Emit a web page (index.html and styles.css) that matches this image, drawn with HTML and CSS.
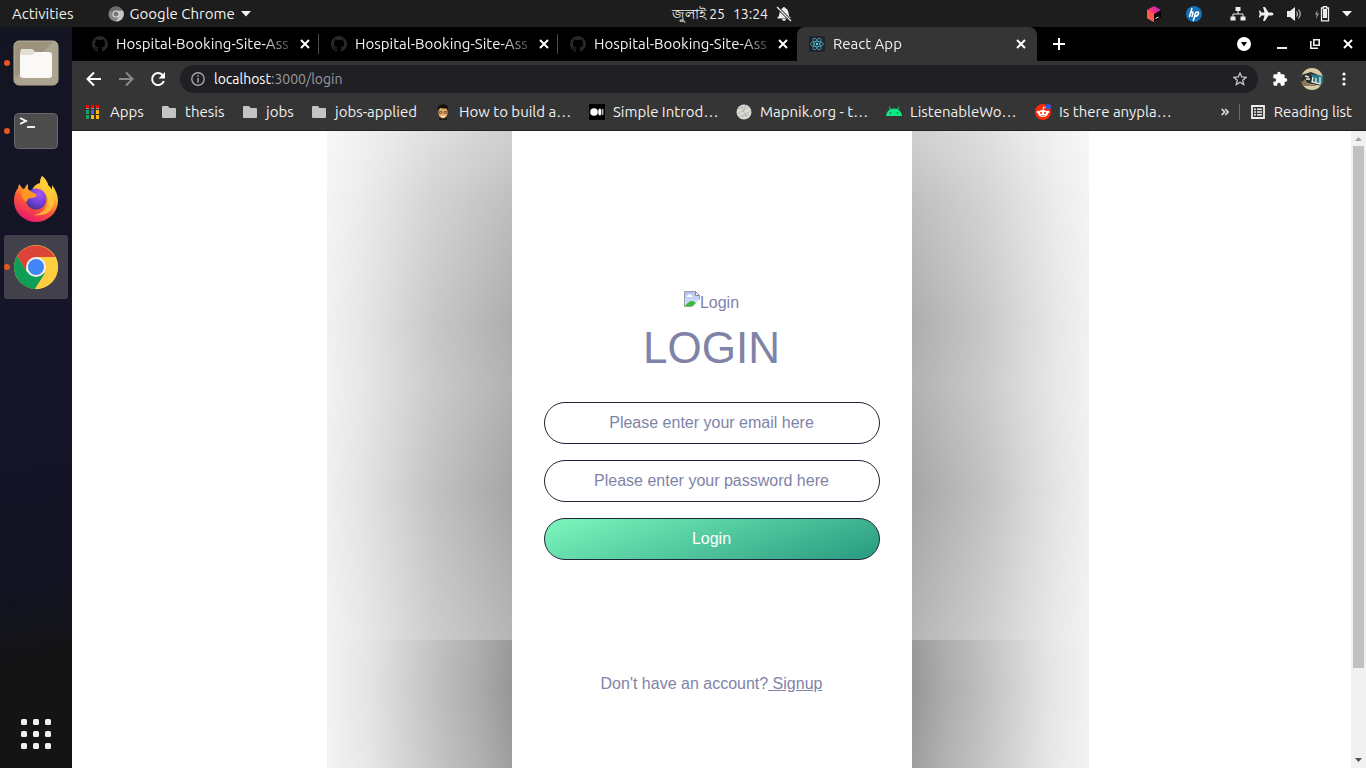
FILE: index.html
```html
<!DOCTYPE html>
<html lang="en">
<head>
<meta charset="utf-8">
<title>React App</title>
<link rel="stylesheet" href="styles.css">
</head>
<body>
<svg class="defs" width="0" height="0" aria-hidden="true">
  <defs>
    <symbol id="github" viewBox="0 0 16 16"><path fill="#24292e" d="M8 0C3.58 0 0 3.58 0 8c0 3.54 2.29 6.53 5.47 7.59.4.07.55-.17.55-.38v-1.49c-2.01.37-2.53-.49-2.69-.94-.09-.23-.48-.94-.82-1.13-.28-.15-.68-.52-.01-.53.63-.01 1.08.58 1.23.82.72 1.21 1.87.87 2.33.66.07-.52.28-.87.51-1.07-1.78-.2-3.64-.89-3.64-3.95 0-.87.31-1.59.82-2.15-.08-.2-.36-1.02.08-2.12 0 0 .67-.21 2.2.82a7.6 7.6 0 014 0c1.53-1.04 2.2-.82 2.2-.82.44 1.1.16 1.92.08 2.12.51.56.82 1.27.82 2.15 0 3.07-1.87 3.75-3.65 3.95.29.25.54.73.54 1.48v2.19c0 .21.15.46.55.38A8 8 0 008 0z"/></symbol>
    <symbol id="close" viewBox="0 0 10 10"><path d="M1 1l8 8M9 1L1 9" stroke="#fff" stroke-width="1.9"/></symbol>
    <symbol id="folder" viewBox="0 0 16 16"><path fill="#c4c4c4" d="M2 2h5l1.500 2H14q1 0 1 1v8q0 1-1 1H2q-1 0-1-1V3q0-1 1-1z"/></symbol>
    <symbol id="caret" viewBox="0 0 10 6"><path fill="#f2f2f2" d="M0 0h10L5 5.500z"/></symbol>
    <linearGradient id="ffFlame" x1=".8" y1="0" x2=".3" y2="1"><stop offset="0" stop-color="#fff04a"/><stop offset=".35" stop-color="#ffb52e"/><stop offset=".62" stop-color="#ff5a36"/><stop offset="1" stop-color="#e5156f"/></linearGradient>
    <radialGradient id="ffGlobe" cx=".65" cy=".25" r=".8"><stop offset="0" stop-color="#a755f8"/><stop offset=".6" stop-color="#7140d8"/><stop offset="1" stop-color="#43308e"/></radialGradient>
    <linearGradient id="jb" x1="1" y1="0" x2="0" y2="1"><stop offset="0" stop-color="#9c28e8"/><stop offset=".45" stop-color="#f92f77"/><stop offset="1" stop-color="#ff8a1e"/></linearGradient>
    <linearGradient id="sky" x1="0" y1="0" x2="0" y2="1"><stop offset="0" stop-color="#aec2f0"/><stop offset="1" stop-color="#dfe7ff"/></linearGradient>
    <clipPath id="avatarClip"><circle cx="11" cy="11" r="11"/></clipPath>
  </defs>
</svg>

<header class="topbar">
  <div class="topbar-left">
    <button class="plain">Activities</button>
    <button class="plain app-menu">
      <svg width="16" height="16" viewBox="0 0 16 16"><circle cx="8" cy="8" r="7.500" fill="#858585"/><path d="M8 4.500h7A7.500 7.500 0 018 15.500L11 10z" fill="#c4c4c4"/><path d="M1.500 4.200A7.500 7.500 0 0114.700 4.500H8L5 8z" fill="#6c6c6c"/><circle cx="8" cy="8" r="3.600" fill="#e0e0e0"/><circle cx="8" cy="8" r="2.500" fill="#777"/></svg>
      Google Chrome
      <svg width="10" height="6"><use href="#caret"/></svg>
    </button>
  </div>
  <button class="plain clock"><span lang="bn">জুলাই 25</span><span>13:24</span>
    <svg width="16" height="16" viewBox="0 0 16 16"><path fill="#eee" d="M8 1q1 0 1.200 1Q12 3 12.500 7q0 3 2 4.500v1h-13v-1Q3.500 10 3.500 7 4 3 6.800 2 7 1 8 1zM6 13h4q-.5 2-2 2t-2-2z"/><path d="M1 1l14 14" stroke="#1d1d1d" stroke-width="3"/><path d="M1 1l14 14" stroke="#eee" stroke-width="1.300"/></svg>
  </button>
  <div class="tray">
    <svg width="16" height="16" viewBox="0 0 16 16"><path fill="url(#jb)" d="M8 0l7 4v8l-7 4-7-4V4z"/><path fill="#ff5a4c" d="M1 4l7 4v8l-7-4z"/><path fill="#050505" d="M8 8l7-4v8l-7 4z"/><path d="M9.500 12.500l3-1.500" stroke="#fff"/></svg>
    <svg class="hp" width="16" height="16" viewBox="0 0 16 16"><circle cx="8" cy="8" r="8" fill="#1670b5"/><path d="M6 2L3.300 11M4.500 7q3-2 2.500 0L5.800 11M9.800 6L7.200 15M9.500 6.500q3.500-1.500 3 1T8.500 10.500" fill="none" stroke="#fff" stroke-width="1.500"/></svg>
    <svg width="16" height="16" viewBox="0 0 16 16"><path fill="#eee" d="M5.500 1h5v4h-5zM.5 10.500h5v4h-5zM10.500 10.500h5v4h-5z"/><path d="M8 5v3M3 11V8h10v3" fill="none" stroke="#eee"/></svg>
    <svg width="16" height="16" viewBox="0 0 16 16"><path fill="#eee" d="M5 1h2l3.500 5.500H14q1.500.5 1.500 1.500T14 9.500h-3.500L7 15H5l1.500-5.500H3.500L2 11.500H.8L1.700 8 .8 4.500H2l1.500 2h3z"/></svg>
    <svg width="16" height="16" viewBox="0 0 16 16"><path fill="#eee" d="M1 5h3l5-4v14l-5-4H1z"/><path d="M10.500 5.500q2 2.500 0 5M12.500 3.500q3.500 4.500 0 9" fill="none" stroke="#bbb" stroke-width="1.200"/></svg>
    <svg width="16" height="16" viewBox="0 0 16 16"><path fill="#999" d="M3.500 4L1 8.500h1.700L2 13l3-5.500H3.300z"/><path fill="#eee" d="M9 3h4v9H9z"/><path d="M7.500 2h2V.7h3V2h2v12.800h-7z" fill="none" stroke="#eee" stroke-width="1.300"/></svg>
    <svg width="10" height="6"><use href="#caret"/></svg>
  </div>
</header>

<div class="desktop">
  <nav class="dock" aria-label="Dock">
    <button class="dock-item running" aria-label="Files"><svg width="46" height="46" viewBox="0 0 46 46"><rect x="1" y="1" width="44" height="44" rx="5" fill="#9d937c" stroke="#b8b19d"/><path d="M2 38L40 2h2q2 0 2 3v36q0 3-3 3H5q-3 0-3-3z" fill="#aca48f"/><path d="M7 15q0-6 2-6h9q3 0 4 4h12v8H7z" fill="#e4dfd3"/><path d="M7 15h12l3-3h14q3 0 3 3v20q0 3-3 3H10q-3 0-3-3z" fill="#faf9f7"/></svg></button>
    <button class="dock-item running" aria-label="Terminal"><svg width="46" height="46" viewBox="0 0 46 46"><rect x="1.500" y="5.500" width="43" height="35" rx="4" fill="#4c4c4c" stroke="#696969"/><path d="M7 10l6 3-6 3" fill="none" stroke="#fff" stroke-width="1.800"/><path d="M14 19h8" stroke="#fff" stroke-width="1.800"/></svg></button>
    <button class="dock-item" aria-label="Firefox"><svg width="46" height="48" viewBox="0 0 46 48"><path fill="url(#ffFlame)" d="M29 1q5 4 6 9 3 3 4 5v-5q6 8 6 16a22 21 0 01-44 0q0-8 4-13l1-4 4 5 2-1q0-2 3-4v5l3 3q3-8 9-9 0-4 2-7z"/><circle cx="23" cy="24" r="10.500" fill="url(#ffGlobe)"/><path fill="#ff9822" d="M9 15q5-2 10 2l5 3q-1 3-6 3-4 0-4 4Q7 24 9 15z"/><path fill="#ffcf38" d="M29 1q-5 8 2 15 6 6 3 14-3 8-13 10 16 2 20-11Q43 16 35 10 34 5 29 1z" opacity=".75"/></svg></button>
    <button class="dock-item running active" aria-label="Google Chrome"><svg width="46" height="46" viewBox="0 0 46 46"><circle cx="23" cy="23" r="22" fill="#ffcd40"/><path fill="#db4437" d="M4 12A22 22 0 0142 13H23L12.500 26z"/><path fill="#0f9d58" d="M4 12A22 22 0 0022 45l10-16-18-1z"/><path fill="#ffcd40" d="M23 13h19.600A22 22 0 0122 45l11-17z"/><circle cx="23" cy="23" r="10" fill="#f1f1f1"/><circle cx="23" cy="23" r="8" fill="#4285f4"/></svg></button>
    <button class="dock-item apps" aria-label="Show Applications"><svg width="30" height="30" viewBox="0 0 30 30" fill="#f0f0ee"><rect width="6" height="6" rx="1.500"/><rect x="12" width="6" height="6" rx="1.500"/><rect x="24" width="6" height="6" rx="1.500"/><rect y="12" width="6" height="6" rx="1.500"/><rect x="12" y="12" width="6" height="6" rx="1.500"/><rect x="24" y="12" width="6" height="6" rx="1.500"/><rect y="24" width="6" height="6" rx="1.500"/><rect x="12" y="24" width="6" height="6" rx="1.500"/><rect x="24" y="24" width="6" height="6" rx="1.500"/></svg></button>
  </nav>

  <section class="browser">
    <div class="tabstrip">
      <div class="tab"><svg width="16" height="16"><use href="#github"/></svg><span class="tab-title">Hospital-Booking-Site-Ass</span><button class="plain" aria-label="Close tab"><svg width="10" height="10"><use href="#close"/></svg></button></div>
      <div class="tab"><svg width="16" height="16"><use href="#github"/></svg><span class="tab-title">Hospital-Booking-Site-Ass</span><button class="plain" aria-label="Close tab"><svg width="10" height="10"><use href="#close"/></svg></button></div>
      <div class="tab last"><svg width="16" height="16"><use href="#github"/></svg><span class="tab-title">Hospital-Booking-Site-Ass</span><button class="plain" aria-label="Close tab"><svg width="10" height="10"><use href="#close"/></svg></button></div>
      <div class="tab current"><svg width="16" height="16" viewBox="0 0 16 16"><rect width="16" height="16" rx="2" fill="#20232a"/><g fill="none" stroke="#53b9d6" stroke-width=".7"><ellipse cx="8" cy="8" rx="6.500" ry="2.600"/><ellipse cx="8" cy="8" rx="6.500" ry="2.600" transform="rotate(60 8 8)"/><ellipse cx="8" cy="8" rx="6.500" ry="2.600" transform="rotate(120 8 8)"/></g><circle cx="8" cy="8" r="1.200" fill="#61dafb"/></svg><span class="tab-title">React App</span><button class="plain" aria-label="Close tab"><svg width="10" height="10"><use href="#close"/></svg></button></div>
      <button class="plain new-tab" aria-label="New tab"><svg width="12" height="12" viewBox="0 0 12 12"><path d="M6 0v12M0 6h12" stroke="#fff" stroke-width="2"/></svg></button>
      <div class="window-controls">
        <button class="plain" aria-label="Search tabs"><svg width="14" height="14" viewBox="0 0 14 14"><circle cx="7" cy="7" r="7" fill="#fff"/><path d="M4 5h6L7 9.500z"/></svg></button>
        <button class="plain minimize" aria-label="Minimize"><svg width="10" height="10" viewBox="0 0 10 10"><path d="M0 9h10" stroke="#eee" stroke-width="2"/></svg></button>
        <button class="plain" aria-label="Restore"><svg width="10" height="10" viewBox="0 0 10 10"><path d="M3.800.8h5.400v5.400H3.800zM.8 2v7.200H8" fill="none" stroke="#eee" stroke-width="1.600"/></svg></button>
        <button class="plain" aria-label="Close window"><svg width="10" height="10"><use href="#close"/></svg></button>
      </div>
    </div>

    <div class="toolbar">
      <button class="plain nav-btn" aria-label="Back"><svg width="16" height="16" viewBox="0 0 16 16"><path d="M15 8H2M8 1.500L1.500 8 8 14.500" fill="none" stroke="#fff" stroke-width="2"/></svg></button>
      <button class="plain nav-btn" aria-label="Forward"><svg width="16" height="16" viewBox="0 0 16 16"><path d="M1 8h13M8 1.500L14.500 8 8 14.500" fill="none" stroke="#8a8a8a" stroke-width="2"/></svg></button>
      <button class="plain nav-btn" aria-label="Reload"><svg width="16" height="16" viewBox="0 0 16 16"><path d="M13.800 10A6 6 0 1112.500 4" fill="none" stroke="#fff" stroke-width="2"/><path d="M15 1v6.500H8.500z" fill="#fff"/></svg></button>
      <div class="omnibox">
        <svg width="14" height="14" viewBox="0 0 14 14"><circle cx="7" cy="7" r="6.200" fill="none" stroke="#a6a6ab" stroke-width="1.400"/><path d="M7 6v4.500M7 3.300v1.500" stroke="#a6a6ab" stroke-width="1.500"/></svg>
        <span class="address"><span class="host">localhost</span>:3000/login</span>
        <button class="plain" aria-label="Bookmark this tab"><svg width="14" height="14" viewBox="0 0 14 14"><path d="M7 1l1.700 4 4.300.4-3.300 2.800 1 4.300L7 10.200l-3.700 2.300 1-4.300L1 5.400 5.300 5z" fill="none" stroke="#c6c6c8" stroke-width="1.300"/></svg></button>
      </div>
      <button class="plain nav-btn" aria-label="Extensions"><svg width="16" height="16" viewBox="0 0 24 24"><path fill="#fff" d="M20.500 11H19V7a2 2 0 00-2-2h-4V3.500a2.500 2.500 0 00-5 0V5H4a2 2 0 00-2 2v3.800h1.500a2.700 2.700 0 010 5.400H2V20a2 2 0 002 2h3.800v-1.500a2.700 2.700 0 015.400 0V22H17a2 2 0 002-2v-4h1.500a2.500 2.500 0 000-5z"/></svg></button>
      <button class="plain nav-btn" aria-label="Profile"><svg width="22" height="22" viewBox="0 0 22 22"><g clip-path="url(#avatarClip)"><path fill="#d9cba7" d="M0 0h22v22H0z"/><path fill="#25302f" d="M0 7l10-3 12 5v9L5 15l-5 1z"/><path fill="#277b8c" d="M10 6l12 2v9l-9-2z"/><path d="M4 8l4 1M5 11h4M12 9l-1 5 3 .500M15 10v5l4 1V9" stroke="#efeddc" stroke-width="1.300" fill="none"/><path fill="#8e775a" d="M0 15l4-4 3 5 8 1v1H2z"/></g></svg></button>
      <button class="plain nav-btn" aria-label="Menu"><svg width="4" height="14" viewBox="0 0 4 14" fill="#fff"><circle cx="2" cy="2" r="1.600"/><circle cx="2" cy="7" r="1.600"/><circle cx="2" cy="12" r="1.600"/></svg></button>
    </div>

    <nav class="bookmarks" aria-label="Bookmarks">
      <div class="bookmark-list">
        <a href="#"><svg width="14" height="14" viewBox="0 0 14 14"><g fill="#f00"><path d="M0 0h3v3H0zM5 0h3v3H5zM10 0h3v3h-3z"/></g><g fill="#999"><path d="M0 3h3v1H0zM5 3h3v1H5zM10 3h3v1h-3z"/></g><path fill="#13a05a" d="M0 5h3v4H0zM0 10h3v4H0z"/><path fill="#4064f4" d="M5 5h3v4H5z"/><path fill="#fdb813" d="M10 5h3v4h-3zM5 10h3v4H5zM10 10h3v4h-3z"/></svg>Apps</a>
        <a href="#"><svg width="16" height="16"><use href="#folder"/></svg>thesis</a>
        <a href="#"><svg width="16" height="16"><use href="#folder"/></svg>jobs</a>
        <a href="#"><svg width="16" height="16"><use href="#folder"/></svg>jobs-applied</a>
        <a href="#"><svg width="16" height="16" viewBox="0 0 16 16"><path fill="#171717" d="M4 16l1-3h6l1 3z"/><ellipse cx="8" cy="8.500" rx="4.600" ry="6" fill="#e9ac66"/><path fill="#111" d="M3 6.500Q2 2 5 1q5-2 7.500 1 1.500 2 .3 4.500L12 4.500Q8 4.500 5 4z"/><path d="M4.500 7.500h2.500v1.800H4.500zM9 7.500h2.500v1.800H9z" fill="none" stroke="#453020" stroke-width=".6"/><path d="M6 12q2 1.500 4 0" stroke="#fff" fill="none"/></svg>How to build a…</a>
        <a href="#"><svg width="16" height="16" viewBox="0 0 16 16"><path d="M0 0h16v16H0z"/><circle cx="5" cy="8" r="3.800" fill="#fff"/><ellipse cx="10.800" cy="8" rx="1.600" ry="3.600" fill="#fff"/><path d="M13.800 5v6" stroke="#fff"/></svg>Simple Introd…</a>
        <a href="#"><svg width="16" height="16" viewBox="0 0 16 16"><circle cx="8" cy="8" r="7.500" fill="#d9ddd4"/><path d="M1.500 10L13 3M3 13L15 7M5 2l6 12M10 1L7 8" stroke="#b2beac" fill="none"/><path d="M2 5l8-3M6 13l7-3" stroke="#c6aac6"/></svg>Mapnik.org - t…</a>
        <a href="#"><svg width="16" height="16" viewBox="0 0 16 16"><path fill="#0be881" d="M0 12q.5-5 4-6.500L2.700 3l.6-.4L4.800 5q3.200-1 6.400 0l1.500-2.400.6.400L12 5.500q3.500 1.500 4 6.500z"/><circle cx="4.500" cy="9" r=".7" fill="#333"/><circle cx="11.500" cy="9" r=".7" fill="#333"/></svg>ListenableWo…</a>
        <a href="#"><svg width="16" height="16" viewBox="0 0 16 16"><circle cx="8" cy="8" r="8" fill="#ff2a05"/><ellipse cx="8" cy="9.500" rx="5" ry="3.500" fill="#fff"/><circle cx="3" cy="8" r="1.300" fill="#fff"/><circle cx="13" cy="8" r="1.300" fill="#fff"/><path d="M8 6l.6-3 2 .5" stroke="#fff" fill="none"/><circle cx="6" cy="9" r="1" fill="#ff2a05"/><circle cx="10" cy="9" r="1" fill="#ff2a05"/><path d="M6 11.300q2 1 4 0" stroke="#ff2a05" fill="none" stroke-width=".7"/><circle cx="13.300" cy="2.700" r="2.700" fill="#3e53d6"/></svg>Is there anypla…</a>
      </div>
      <div class="bookmark-end">
        <button class="plain" aria-label="More bookmarks"><svg width="8" height="8" viewBox="0 0 8 8"><path d="M.7 1l3 3-3 3M4.200 1l3 3-3 3" fill="none" stroke="#eee" stroke-width="1.500"/></svg></button>
        <button class="plain reading"><svg width="14" height="14" viewBox="0 0 14 14"><path d="M1 1h12v12H1z" fill="none" stroke="#eee" stroke-width="1.800"/><path d="M3 4.300h2M6 4.300h5M3 7h2M6 7h5M3 9.700h2M6 9.700h5" stroke="#eee" stroke-width="1.500"/></svg>Reading list</button>
      </div>
    </nav>

    <div class="viewport">
      <main class="page">
        <div class="shade shade-left"><div class="shade-upper"></div><div class="shade-lower"></div></div>
        <form class="login" action="#">
          <div class="logo"><svg width="16" height="16" viewBox="0 0 16 16" aria-hidden="true"><path d="M.5.5h11l4 4v11H.5z" fill="url(#sky)" stroke="#a0a0a0"/><path d="M11.500.5v4h4z" fill="#fff" stroke="#888"/><path d="M3 6q-.5-2 1.500-2 1-2 2.500 0 2 0 1.500 2z" fill="#fff"/><path d="M1 15q6-8 11-3v3z" fill="#3db93d"/><path d="M8 16l8-8v8z" fill="#fff"/></svg><span>Login</span></div>
          <h1>LOGIN</h1>
          <div class="fields">
            <input type="email" aria-label="Email" placeholder="Please enter your email here">
            <input type="password" aria-label="Password" placeholder="Please enter your password here">
            <button type="submit">Login</button>
          </div>
          <p>Don't have an account?<a href="#">&nbsp;Signup</a></p>
        </form>
        <div class="shade shade-right"><div class="shade-upper"></div><div class="shade-lower"></div></div>
      </main>
      <div class="scrollbar" aria-hidden="true">
        <svg width="15" height="15" viewBox="0 0 15 15"><path d="M4 10h7L7.500 6z" fill="#a3a3a3"/></svg>
        <div class="track"><div class="thumb"></div></div>
        <svg width="15" height="15" viewBox="0 0 15 15"><path d="M4 5h7L7.500 9z" fill="#505050"/></svg>
      </div>
    </div>
  </section>
</div>
</body>
</html>
```
FILE: styles.css
```css
* { box-sizing: border-box; }

body {
  margin: 0;
  height: 100vh;
  display: flex;
  flex-direction: column;
  overflow: hidden;
  font: 15px/20px Ubuntu, "Noto Sans", sans-serif;
  color: #f0f0f0;
  background: #fff;
}

svg { display: block; flex: none; }
.defs { position: absolute; }

.plain {
  display: flex;
  align-items: center;
  justify-content: center;
  padding: 0;
  border: 0;
  background: none;
  color: inherit;
  font: inherit;
  white-space: nowrap;
}

/* System bar */
.topbar {
  flex: none;
  height: 27px;
  display: grid;
  grid-template-columns: 33fr auto 28fr;
  align-items: center;
  padding: 0 14px 0 12px;
  background: #1d1d1d;
}
.topbar-left { display: flex; gap: 34px; }
.app-menu { gap: 6px; }
.clock { gap: 8px; font-size: 14px; }
.tray { display: flex; align-items: center; justify-content: flex-end; gap: 12px; }
.tray svg:first-child { margin-right: 12px; }
.hp { margin-right: 16px; }

.desktop { flex: 1; min-height: 0; display: flex; }

/* Dock */
.dock {
  flex: none;
  width: 72px;
  display: flex;
  flex-direction: column;
  gap: 4px;
  padding: 4px 4px 2px;
  background: linear-gradient(170deg, #141522 0%, #15142a 50%, #131322 75%, #141414 86%);
}
.dock-item {
  flex: none;
  position: relative;
  height: 64px;
  display: flex;
  align-items: center;
  justify-content: center;
  padding: 0;
  border: 0;
  border-radius: 3px;
  background: none;
}
.dock-item.active { background: #41404b; }
.dock-item.running::before {
  content: "";
  position: absolute;
  left: 0;
  width: 6px;
  height: 6px;
  border-radius: 50%;
  background: #e95420;
}
.dock-item.apps { margin-top: auto; }

/* Browser frame */
.browser { flex: 1; min-width: 0; display: flex; flex-direction: column; }

.tabstrip {
  flex: none;
  height: 34px;
  display: flex;
  align-items: center;
  padding: 0 13px 0 8px;
  background: #000;
}
.tab {
  flex: 0 1 239px;
  min-width: 0;
  height: 20px;
  display: flex;
  align-items: center;
  gap: 8px;
  padding: 0 8px 0 12px;
  border-right: 1px solid #4a4a4a;
}
.tab .plain { margin-left: -6px; }
.tab.last { border-color: transparent; }
.tab.current {
  flex-basis: 240px;
  height: 34px;
  padding-right: 11px;
  border: 0;
  border-radius: 8px 8px 0 0;
  background: #353535;
}
.tab-title {
  flex: 1;
  overflow: hidden;
  white-space: nowrap;
  mask-image: linear-gradient(to right, #000 148px, transparent 182px);
}
.new-tab { margin-left: 16px; }
.window-controls { display: flex; align-items: center; gap: 23px; margin-left: auto; }
.minimize { margin-left: 3px; }

.toolbar {
  flex: none;
  height: 36px;
  display: flex;
  align-items: center;
  padding: 0 6px;
  background: #353535;
}
.nav-btn { flex: none; width: 32px; height: 32px; }
.omnibox {
  flex: 1;
  height: 28px;
  display: flex;
  align-items: center;
  gap: 9px;
  margin: 0 6px;
  padding: 0 11px;
  border-radius: 14px;
  background: #202024;
  color: #9b9b9e;
  font-size: 14px;
}
.address { flex: 1; }
.host { color: #fff; }

.bookmarks {
  flex: none;
  height: 34px;
  display: flex;
  align-items: center;
  justify-content: space-between;
  padding: 0 14px 4px;
  border-bottom: 1px solid #222;
  background: #353535;
}
.bookmark-list {
  display: grid;
  grid-template-columns: 75px 81px 69px 124px 154px 147px 150px 149px auto;
}
.bookmark-list a {
  display: flex;
  align-items: center;
  gap: 8px;
  color: inherit;
  text-decoration: none;
  white-space: nowrap;
}
.bookmark-list a:first-child { gap: 10px; }
.bookmark-end { display: flex; align-items: center; gap: 10px; }
.reading { gap: 9px; padding-left: 11px; border-left: 1px solid #6a6a6a; line-height: 16px; }

/* Web page */
.viewport { flex: 1; min-height: 0; display: flex; background: #fff; }
.page {
  flex: 1;
  display: grid;
  grid-template-columns: 1fr 400px 1fr;
  overflow: hidden;
}
.shade { display: grid; grid-template-rows: 509fr 128fr; }
.shade-left { justify-self: end; width: 185px; --toward: to left; }
.shade-right { justify-self: start; width: 177px; --toward: to right; }
.shade-upper {
  background: linear-gradient(var(--toward),
    rgba(0, 0, 0, 0.41), rgba(0, 0, 0, 0.34) 22%, rgba(0, 0, 0, 0.28) 42%,
    rgba(0, 0, 0, 0.19) 64%, rgba(0, 0, 0, 0.12) 82%, rgba(0, 0, 0, 0.07));
  mask-image: linear-gradient(rgba(0, 0, 0, 0.45), rgba(0, 0, 0, 0.62) 14%,
    rgba(0, 0, 0, 0.78) 38%, rgba(0, 0, 0, 0.74) 50%,
    rgba(0, 0, 0, 0.86) 71%, rgba(0, 0, 0, 0.7));
}
.shade-lower {
  background: linear-gradient(var(--toward),
    rgba(0, 0, 0, 0.41), rgba(0, 0, 0, 0.33) 18%, rgba(0, 0, 0, 0.27) 35%,
    rgba(0, 0, 0, 0.19) 56%, rgba(0, 0, 0, 0.1) 78%, rgba(0, 0, 0, 0.05));
  mask-image: linear-gradient(rgba(0, 0, 0, 0.97), #000 40%, rgba(0, 0, 0, 0.92));
}

.login {
  display: flex;
  flex-direction: column;
  padding: 160px 32px 0;
  background: #fff;
  color: #8083a8;
  font: 16px/20px Arial, "Liberation Sans", sans-serif;
  text-align: center;
}
.logo { display: flex; justify-content: center; line-height: 24px; }
h1 { margin: 8px 0 29px; font-size: 44px; line-height: 50px; font-weight: 400; }
.fields { display: flex; flex-direction: column; gap: 16px; }
.fields input,
.fields button {
  width: 100%;
  height: 42px;
  padding: 0 16px;
  border: 1px solid #242538;
  border-radius: 21px;
  background: #fff;
  font: inherit;
  text-align: center;
}
.fields input::placeholder { color: #8083a8; opacity: 1; }
.fields button {
  color: #fff;
  background: linear-gradient(160deg, #7df7bd, #289a80);
}
.login p { margin: 114px 0 0; }
.login a { color: inherit; }

.scrollbar { flex: none; width: 15px; display: flex; flex-direction: column; background: #f1f1f1; }
.track { flex: 1; padding: 0 2px; }
.thumb { height: 86%; background: #c1c1c1; }
```
